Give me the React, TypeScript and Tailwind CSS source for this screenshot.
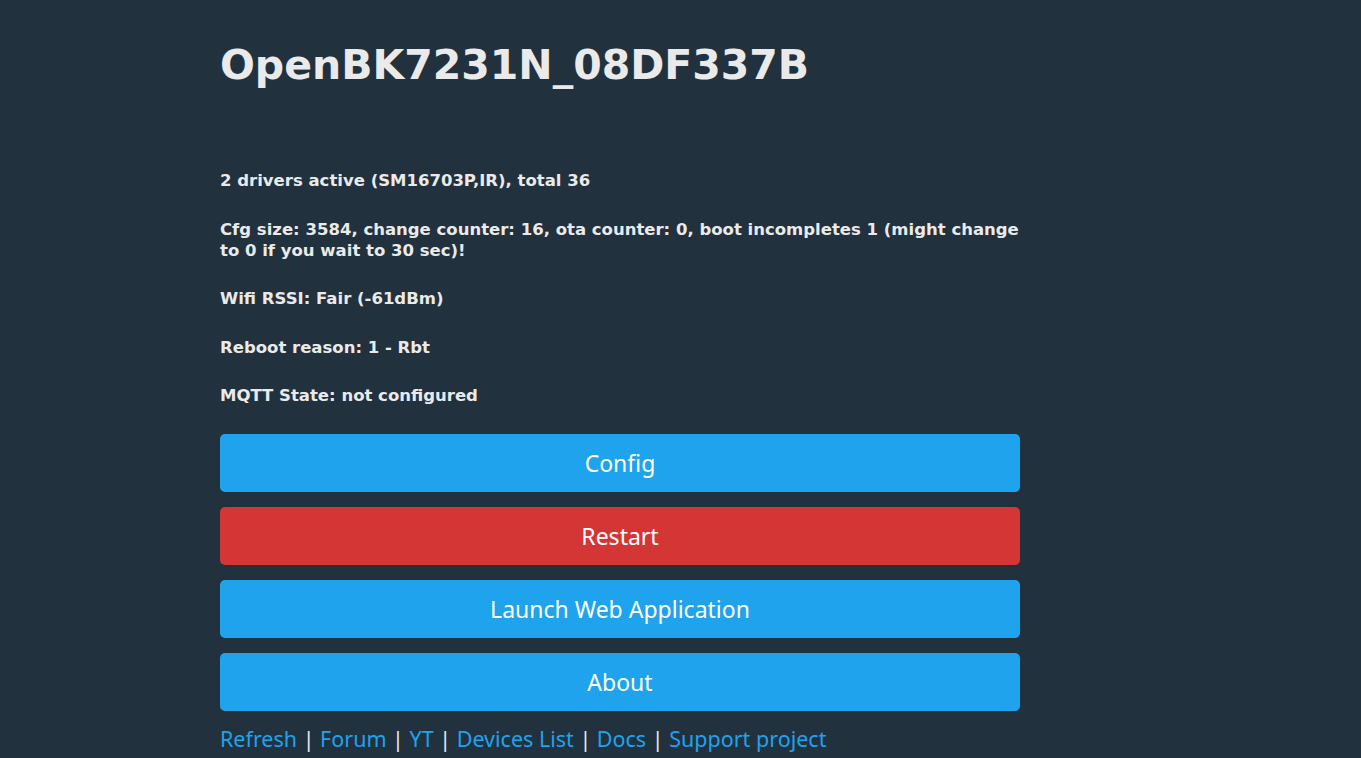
import React from "react";

const info = [
  "2 drivers active (SM16703P,IR), total 36",
  "Cfg size: 3584, change counter: 16, ota counter: 0, boot incompletes 1 (might change to 0 if you wait to 30 sec)!",
  "Wifi RSSI: Fair (-61dBm)",
  "Reboot reason: 1 - Rbt",
  "MQTT State: not configured",
];

const buttons = [
  { label: "Config", cls: "bg-[#1fa3ec]" },
  { label: "Restart", cls: "bg-[#d43535]" },
  { label: "Launch Web Application", cls: "bg-[#1fa3ec]" },
  { label: "About", cls: "bg-[#1fa3ec]" },
];

const links = ["Refresh", "Forum", "YT", "Devices List", "Docs", "Support project"];

export default function App() {
  return (
    <div className="min-h-[758px] w-full bg-[#21313e] text-[#eaeaea]">
      <div className="w-[800px] ml-[220px] pt-[38px]">
        <h1 className="font-['DejaVu_Sans',sans-serif] font-bold text-[41px] leading-[54px] text-[#eaeaea]">
          OpenBK7231N_08DF337B
        </h1>
        <div className="mt-[78px] flex flex-col gap-[27.5px] font-['DejaVu_Sans',sans-serif] font-bold text-[16.5px] leading-[21px]">
          {info.map((t) => (
            <p key={t}>{t}</p>
          ))}
        </div>
        <div className="mt-[28px] flex flex-col gap-[15px] font-['Noto_Sans',sans-serif]">
          {buttons.map((b) => (
            <button
              key={b.label}
              className={`${b.cls} h-[58px] w-full rounded-[5px] text-white text-[23px] leading-[58px] text-center`}
            >
              {b.label}
            </button>
          ))}
        </div>
        <div className="mt-[14px] font-['Noto_Sans',sans-serif] text-[21.5px] leading-[28px]">
          {links.map((l, i) => (
            <span key={l}>
              {i > 0 && <span className="text-[#eaeaea]"> | </span>}
              <a className="text-[#1fa3ec]">{l}</a>
            </span>
          ))}
        </div>
      </div>
    </div>
  );
}
